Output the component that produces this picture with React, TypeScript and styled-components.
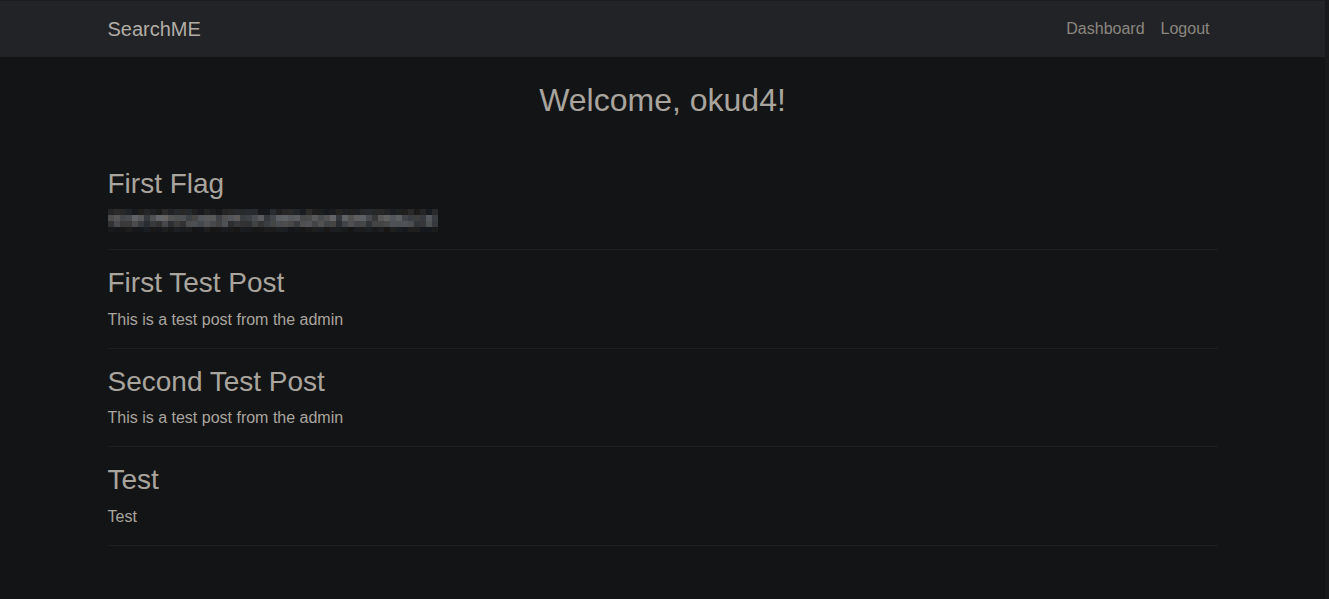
import React from "react";
import styled, { createGlobalStyle } from "styled-components";

const GlobalStyle = createGlobalStyle`
  html, body {
    margin: 0;
    padding: 0;
    background: #131416;
  }
  body {
    font-family: "Liberation Sans", Arial, sans-serif;
    color: #a9a59e;
  }
  * { box-sizing: border-box; }
`;

const Shell = styled.div`
  display: flex;
  min-height: 599px;
`;

const Page = styled.div`
  flex: 1;
  min-width: 0;
`;

const ScrollStrip = styled.div`
  width: 4px;
  background: #17191b;
`;

const Navbar = styled.nav`
  height: 57px;
  background: #222326;
  border-top: 1px solid #1b1c1f;
`;

const Container = styled.div`
  max-width: 1140px;
  margin: 0 auto;
  padding: 0 15px;
`;

const NavInner = styled(Container)`
  height: 100%;
  display: flex;
  align-items: center;
  justify-content: space-between;
`;

const Brand = styled.a`
  font-size: 20px;
  line-height: 30px;
  color: #b1ada6;
  text-decoration: none;
  margin-top: -1px;
`;

const NavList = styled.ul`
  display: flex;
  list-style: none;
  margin: 0;
  padding: 0;
`;

const NavLink = styled.a`
  display: block;
  padding: 8px 8px;
  font-size: 16px;
  line-height: 24px;
  color: #8b8780;
  text-decoration: none;
  margin-top: -1px;
`;

const Welcome = styled.h2`
  margin: 24px 0 32px;
  font-size: 32px;
  font-weight: 400;
  line-height: 1.2;
  text-align: center;
  color: #a9a59e;
`;

const Post = styled.div`
  padding-top: 16px;
  border-bottom: 1px solid #1d1f22;
`;

const PostTitle = styled.h3`
  margin: 0 0 8px;
  font-size: 28px;
  font-weight: 400;
  line-height: 1.2;
  color: #a9a59e;
`;

const PostBody = styled.p`
  margin: 0 0 16px;
  font-size: 16px;
  line-height: 24px;
  color: #a9a59e;
`;

const BlurWrap = styled.div`
  height: 24px;
  margin-bottom: 16px;
  display: flex;
  align-items: center;
`;

function rand(seed: number) {
  let s = seed;
  return () => {
    s = (s * 1103515245 + 12345) & 0x7fffffff;
    return s / 0x7fffffff;
  };
}

const BlurredFlag: React.FC = () => {
  const r = rand(42);
  const cols = 55;
  const cell = 6;
  const rects: React.ReactNode[] = [];
  const rows = [
    { y: 0, h: 6, base: 24, amp: 20 },
    { y: 6, h: 6, base: 52, amp: 50 },
    { y: 12, h: 6, base: 42, amp: 40 },
    { y: 18, h: 5, base: 20, amp: 10 },
  ];
  rows.forEach((row, ri) => {
    for (let c = 0; c < cols; c++) {
      const v = Math.round(row.base + r() * row.amp);
      const tint = Math.round(r() * 6 - 3);
      const col = `rgb(${v + tint},${v + 1},${v + 3 - tint})`;
      rects.push(
        <rect key={`${ri}-${c}`} x={c * cell} y={row.y} width={cell} height={row.h} fill={col} />
      );
    }
  });
  return (
    <svg width={cols * cell} height={24} viewBox={`0 0 ${cols * cell} 24`}>
      {rects}
    </svg>
  );
};

type PostData = { title: string; body?: string; flag?: boolean };

const posts: PostData[] = [
  { title: "First Flag", flag: true },
  { title: "First Test Post", body: "This is a test post from the admin" },
  { title: "Second Test Post", body: "This is a test post from the admin" },
  { title: "Test", body: "Test" },
];

export default function App() {
  return (
    <>
      <GlobalStyle />
      <Shell>
        <Page>
          <Navbar>
            <NavInner>
              <Brand href="#">SearchME</Brand>
              <NavList>
                <li><NavLink href="#">Dashboard</NavLink></li>
                <li><NavLink href="#">Logout</NavLink></li>
              </NavList>
            </NavInner>
          </Navbar>
          <Container>
            <Welcome>Welcome, okud4!</Welcome>
            {posts.map((p) => (
              <Post key={p.title}>
                <PostTitle>{p.title}</PostTitle>
                {p.flag ? (
                  <BlurWrap>
                    <BlurredFlag />
                  </BlurWrap>
                ) : (
                  <PostBody>{p.body}</PostBody>
                )}
              </Post>
            ))}
          </Container>
        </Page>
        <ScrollStrip />
      </Shell>
    </>
  );
}
